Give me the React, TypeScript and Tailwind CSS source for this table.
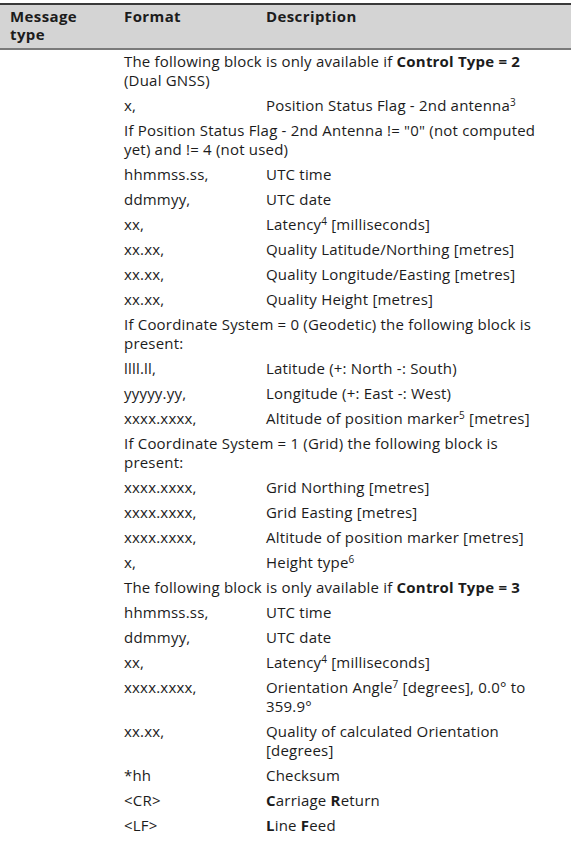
import React from "react";

type Row =
  | { kind: "span"; content: React.ReactNode }
  | { kind: "field"; format: string; desc: React.ReactNode };

// footnote marker, sits near cap height
const Sup = ({ n }: { n: string }) => (
  <span className="text-[10px] leading-none align-[5px]">{n}</span>
);

const rows: Row[] = [
  {
    kind: "span",
    content: (
      <>
        The following block is only available if <b>Control Type = 2</b>{" "}
        (Dual GNSS)
      </>
    )
  },
  {
    kind: "field",
    format: "x,",
    desc: (
      <>
        Position Status Flag - 2nd antenna<Sup n="3" />
      </>
    )
  },
  {
    kind: "span",
    content:
      'If Position Status Flag - 2nd Antenna != "0" (not computed yet) and != 4 (not used)'
  },
  { kind: "field", format: "hhmmss.ss,", desc: "UTC time" },
  { kind: "field", format: "ddmmyy,", desc: "UTC date" },
  {
    kind: "field",
    format: "xx,",
    desc: (
      <>
        Latency<Sup n="4" /> [milliseconds]
      </>
    )
  },
  { kind: "field", format: "xx.xx,", desc: "Quality Latitude/Northing [metres]" },
  { kind: "field", format: "xx.xx,", desc: "Quality Longitude/Easting [metres]" },
  { kind: "field", format: "xx.xx,", desc: "Quality Height [metres]" },
  {
    kind: "span",
    content: "If Coordinate System = 0 (Geodetic) the following block is present:"
  },
  { kind: "field", format: "llll.ll,", desc: "Latitude (+: North -: South)" },
  { kind: "field", format: "yyyyy.yy,", desc: "Longitude (+: East -: West)" },
  {
    kind: "field",
    format: "xxxx.xxxx,",
    desc: (
      <>
        Altitude of position marker<Sup n="5" /> [metres]
      </>
    )
  },
  {
    kind: "span",
    content: "If Coordinate System = 1 (Grid) the following block is present:"
  },
  { kind: "field", format: "xxxx.xxxx,", desc: "Grid Northing [metres]" },
  { kind: "field", format: "xxxx.xxxx,", desc: "Grid Easting [metres]" },
  { kind: "field", format: "xxxx.xxxx,", desc: "Altitude of position marker [metres]" },
  {
    kind: "field",
    format: "x,",
    desc: (
      <>
        Height type<Sup n="6" />
      </>
    )
  },
  {
    kind: "span",
    content: (
      <>
        The following block is only available if <b>Control Type = 3</b>
      </>
    )
  },
  { kind: "field", format: "hhmmss.ss,", desc: "UTC time" },
  { kind: "field", format: "ddmmyy,", desc: "UTC date" },
  {
    kind: "field",
    format: "xx,",
    desc: (
      <>
        Latency<Sup n="4" /> [milliseconds]
      </>
    )
  },
  {
    kind: "field",
    format: "xxxx.xxxx,",
    desc: (
      <>
        Orientation Angle<Sup n="7" /> [degrees], 0.0° to 359.9°
      </>
    )
  },
  {
    kind: "field",
    format: "xx.xx,",
    desc: "Quality of calculated Orientation [degrees]"
  },
  { kind: "field", format: "*hh", desc: "Checksum" },
  {
    kind: "field",
    format: "<CR>",
    desc: (
      <>
        <b>C</b>arriage <b>R</b>eturn
      </>
    )
  },
  {
    kind: "field",
    format: "<LF>",
    desc: (
      <>
        <b>L</b>ine <b>F</b>eed
      </>
    )
  }
];

export default function App() {
  return (
    <div className="min-h-[841px] w-[583px] bg-white pt-[3px] font-['Open_Sans',sans-serif] text-[15px] leading-[19px] tracking-[0.2px] text-[#1c1c1c]">
      <div className="w-[571px]">
        {/* Header */}
        <div className="grid grid-cols-[114px_142px_1fr] border-t-2 border-b-2 border-t-[#3a3a3a] border-b-[#7a7a7a] bg-[#d4d4d4] font-bold leading-[18px] tracking-[0.4px]">
          <div className="pl-[10px] pt-[2px] pb-[5px]">
            Message
            <br />
            type
          </div>
          <div className="pl-[10px] pt-[2px]">Format</div>
          <div className="pl-[10px] pt-[2px]">Description</div>
        </div>

        {/* Body */}
        <div className="grid grid-cols-[114px_142px_1fr]">
          {rows.map((r, i) =>
            r.kind === "span" ? (
              <React.Fragment key={i}>
                <div />
                <div className="col-span-2 pt-[2px] pb-[4px] pl-[10px] pr-[11px]">
                  {r.content}
                </div>
              </React.Fragment>
            ) : (
              <React.Fragment key={i}>
                <div />
                <div className="pt-[2px] pb-[4px] pl-[10px]">{r.format}</div>
                <div className="pt-[2px] pb-[4px] pl-[10px] pr-[11px]">{r.desc}</div>
              </React.Fragment>
            )
          )}
        </div>
      </div>
    </div>
  );
}
